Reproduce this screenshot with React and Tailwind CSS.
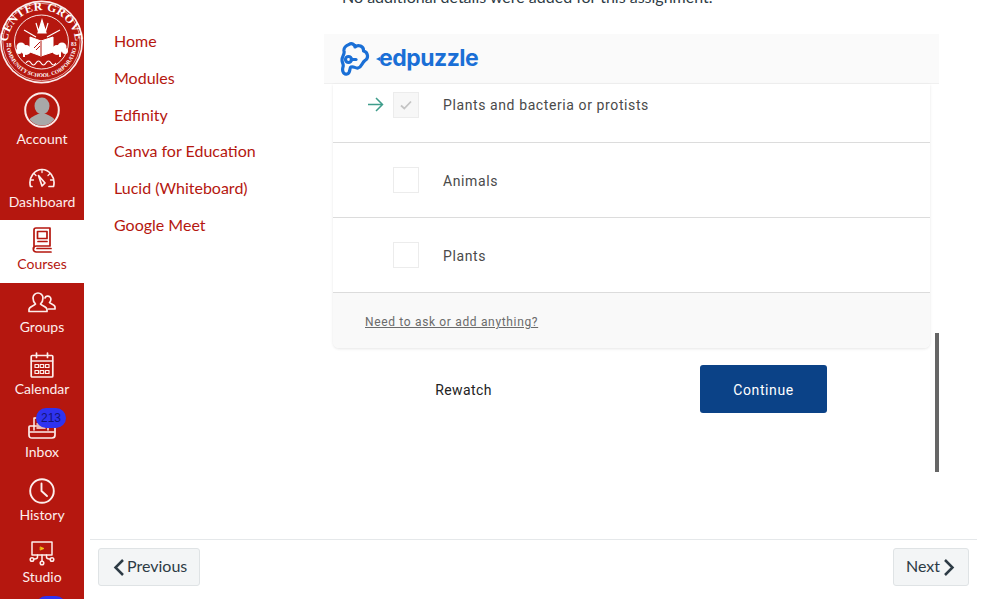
import React from "react";

const RED = "#b5170f";

function Seal() {
  return (
    <svg width="84" height="86" viewBox="0 0 84 86" className="block">
      <defs>
        <path id="sealTop" d="M 10 57 A 34 34 0 1 1 73 57" />
        <path id="sealBottom" d="M 7 50 A 35.500 35.500 0 0 0 76 50" />
      </defs>
      <circle cx="41.500" cy="42" r="41.500" fill="#fbeeee" />
      <circle cx="41.500" cy="42" r="39.800" fill={RED} />
      <circle cx="41.500" cy="42" r="38.600" fill="none" stroke="#fff" strokeWidth="0.600" />
      <circle cx="41.500" cy="42" r="27" fill="none" stroke="#fff" strokeWidth="0.900" />
      <text fill="#fff" fontSize="11.800" fontWeight="700" fontFamily="'Liberation Serif', serif" letterSpacing="0.500">
        <textPath href="#sealTop" startOffset="50%" textAnchor="middle">CENTER GROVE</textPath>
      </text>
      <text fill="#fff" fontSize="5.600" fontWeight="700" fontFamily="'Liberation Serif', serif">
        <textPath href="#sealBottom" startOffset="50%" textAnchor="middle">COMMUNITY SCHOOL CORPORATION</textPath>
      </text>
      <text x="6" y="47" fill="#fff" fontSize="5.500" fontWeight="700" fontFamily="'Liberation Serif', serif">18</text>
      <text x="71" y="46" fill="#fff" fontSize="5.500" fontWeight="700" fontFamily="'Liberation Serif', serif">83</text>
      <path d="M42 20 L38 33 L46 33 Z M36 23 L39 33 M48 23 L45 33 M24 30 L36 37 M60 30 L47 37" stroke="#fff" strokeWidth="1.200" fill="#fff" />
      <path d="M30 37 L41 41 L53 37 L53 52 L41 56 L30 52 Z" fill="#fff" stroke="#fff" />
      <path d="M41 41 L41 56 M34 48 L40 42 M36 50 L40 46" stroke={RED} strokeWidth="1" fill="none" />
      <circle cx="21" cy="47" r="4.500" fill="#fff" /><circle cx="26" cy="50" r="5" fill="#fff" /><circle cx="19" cy="51" r="3" fill="#fff" />
      <rect x="23" y="52" width="2" height="5" fill="#fff" />
      <circle cx="62" cy="47" r="4.500" fill="#fff" /><circle cx="57" cy="50" r="5" fill="#fff" /><circle cx="65" cy="51" r="3" fill="#fff" />
      <rect x="59" y="52" width="2" height="5" fill="#fff" />
      <path d="M26 63 q2.500 -4 5 0 t5 0 t5 0 t5 0 t5 0 t5 0" stroke="#fff" strokeWidth="1.200" fill="none" />
    </svg>
  );
}

const s = { fill: "none", stroke: "currentColor", strokeWidth: 1.7, strokeLinejoin: "round", strokeLinecap: "round" };

const Avatar = () => (
  <svg width="36" height="36" viewBox="0 0 36 36" className="mb-[10px] shrink-0">
    <defs><clipPath id="avc"><circle cx="18" cy="18" r="15.600" /></clipPath></defs>
    <circle cx="18" cy="18" r="16.800" fill="#b5170f" stroke="#fbe9e7" strokeWidth="2" />
    <g clipPath="url(#avc)" fill="#a8a8a8">
      <ellipse cx="18" cy="14" rx="7.500" ry="8.500" />
      <path d="M2 36 C3 26 10 24 14 22 L22 22 C26 24 33 26 34 36 Z" />
    </g>
  </svg>
);
const Dash = () => (
  <svg width="28" height="20" viewBox="0 0 28 20" {...s}>
    <path d="M4 18.500 H2.500 C0 9 7 1.500 14 1.500 C21 1.500 28 9 25.500 18.500 H21" />
    <path d="M14 1.500 v3 M6 5.500 l2 2 M22 5.500 l-2 2 M2.500 12 h3 M25.500 12 h-3" strokeWidth="1.300" />
    <path d="M10.500 7.500 L17 15 L14 18 Z" />
  </svg>
);
const Courses = () => (
  <svg width="22" height="26" viewBox="0 0 22 26" {...s}>
    <path d="M3 21 V3 Q3 1 5 1 H19 V19 H5.500 Q2 19 2.300 22 Q2.500 25 5.500 25 H20" />
    <path d="M20 21.500 H6" />
    <rect x="6.500" y="4.500" width="9.500" height="7" />
    <path d="M7 14.500 H16" />
  </svg>
);
const Groups = () => (
  <svg width="28" height="21" viewBox="0 0 28 21" {...s}>
    <path d="M1 19.500 V17.500 C1 15 6 14 7.500 12 C5.500 10 5 8 5 6 C5 3 7.500 1 10 1 C12.500 1 15 3 15 6 C15 8 14.500 10 12.500 12 C14 14 19 15 19 17.500 V19.500 Z" />
    <path d="M17 6 C17.500 4 20.500 3.500 22 5 C23.500 6.500 23 9 21.500 10.500 C22.500 12 27 12.500 27 15 V17 H20.500" />
  </svg>
);
const Calendar = () => (
  <svg width="24" height="26" viewBox="0 0 24 26" {...s}>
    <rect x="1.200" y="3.500" width="21.600" height="21.500" rx="1" />
    <path d="M1.500 9 H22.500 M6.500 1 V5.500 M17.500 1 V5.500" />
    <path d="M5 12.500 h3.500 v3 h-3.500 z M10.200 12.500 h3.500 v3 h-3.500 z M15.500 12.500 h3.500 v3 h-3.500 z M5 18.500 h3.500 v3 h-3.500 z M10.200 18.500 h3.500 v3 h-3.500 z M15.500 18.500 h3.500 v3 h-3.500 z" strokeWidth="1.200" />
  </svg>
);
const Inbox = () => (
  <svg width="28" height="24" viewBox="0 0 28 24" {...s}>
    <path d="M2 10 H26 Q27 10 27 11 V19 Q27 22 24 22 H4 Q1 22 1 19 V11 Q1 10 2 10 Z" />
    <path d="M6 14 V2 H20 V14 M9 8 H16 M9 12 H17 M2 16 H26" strokeWidth="1.500" />
  </svg>
);
const History = () => (
  <svg width="26" height="26" viewBox="0 0 26 26" {...s}>
    <circle cx="13" cy="13" r="11.800" strokeWidth="1.900" />
    <path d="M12.500 5.500 V13 L18 18" strokeWidth="1.900" />
  </svg>
);
const Studio = () => (
  <svg width="26" height="25" viewBox="0 0 26 25" {...s}>
    <rect x="3" y="1" width="20" height="13" strokeWidth="1.500" />
    <path d="M11.500 6 L15 7.500 L11.500 9 Z" fill="#f5c518" stroke="#f5c518" strokeWidth="0.800" />
    <path d="M13 14 V20 M8.500 14 V16 Q8.500 18 5.500 18 H4.500 M17.500 14 V16 Q17.500 18 20.500 18 H21.500" strokeWidth="1.500" />
    <circle cx="13" cy="22" r="1.800" strokeWidth="1.500" /><circle cx="3" cy="18.500" r="1.800" strokeWidth="1.500" /><circle cx="23" cy="18.500" r="1.800" strokeWidth="1.500" />
  </svg>
);

function NavItem({ icon, label, active, badge }) {
  return (
    <div className={`relative h-[62.600px] flex flex-col items-center justify-end pb-[8.600px] ${active ? "bg-white text-[#b5170f]" : "text-[#fdeeec]"}`}>
      <div className="h-[26px] flex items-center justify-center">{icon}</div>
      <div className="mt-[1px] text-[14px] leading-[20px]">{label}</div>
      {badge && (
        <div className="absolute left-[36px] top-0 h-[20px] w-[30px] rounded-full bg-[#2f33f0] text-[#14147a] text-[12px] leading-[20px] text-center font-['Liberation_Sans',sans-serif]">
          {badge}
        </div>
      )}
    </div>
  );
}

function Option({ label, first, checked }) {
  return (
    <div className={`flex items-center border-b border-[#dcdcdc] pl-[60px] ${first ? "h-[59px] pb-[16px]" : "h-[75px]"}`}>
      <div className={`relative h-[26px] w-[26px] border border-[#ececec] flex items-center justify-center ${checked ? "bg-[#f7f7f7]" : "bg-white"}`}>
        {checked && (
          <>
            <svg width="12" height="10" viewBox="0 0 12 10" fill="none" stroke="#c4c4c4" strokeWidth="1.800"><path d="M1 5.500 L4.300 8.500 L11 1.500" /></svg>
            <svg className="absolute left-[-27px] top-[4px]" width="17" height="15" viewBox="0 0 17 15" fill="none" stroke="#3f9d8b" strokeWidth="1.500"><path d="M1 7.500 H15.500 M9 1 L15.500 7.500 L9 14" /></svg>
          </>
        )}
      </div>
      <div className={`ml-[24px] text-[14px] tracking-[0.600px] text-[#4a4a4a] font-['Roboto',sans-serif] ${first ? "mt-[1px]" : "mt-[2px]"}`}>{label}</div>
    </div>
  );
}

export default function App() {
  const links = ["Home", "Modules", "Edfinity", "Canva for Education", "Lucid (Whiteboard)", "Google Meet"];
  return (
    <div className="flex h-[599px] w-[987px] overflow-hidden bg-white font-['Lato',sans-serif]">
      <aside className="w-[84px] shrink-0 bg-[#b5170f] overflow-hidden">
        <div className="h-[95px]"><Seal /></div>
        <NavItem icon={<Avatar />} label="Account" />
        <NavItem icon={<Dash />} label="Dashboard" />
        <NavItem icon={<Courses />} label="Courses" active />
        <NavItem icon={<Groups />} label="Groups" />
        <NavItem icon={<Calendar />} label="Calendar" />
        <NavItem icon={<Inbox />} label="Inbox" badge="213" />
        <NavItem icon={<History />} label="History" />
        <NavItem icon={<Studio />} label="Studio" />
        <NavItem icon={null} label="" badge=" " />
      </aside>

      <main className="flex-1 flex flex-col min-w-0">
        <div className="h-[539px] flex overflow-hidden">
          <nav className="w-[240px] shrink-0 pl-[30px] pt-[23px]">
            {links.map((l) => (
              <div key={l} className="h-[36.800px] text-[16px] leading-[36.800px] text-[#b5170f]">{l}</div>
            ))}
          </nav>
          <section className="relative w-[615px] shrink-0">
            <div className="mt-[-15px] pl-[18px] text-[16px] leading-[24px] text-[#2d3b45]">No additional details were added for this assignment.</div>
            <header className="mt-[25px] h-[50px] bg-[#fafafa] border-b border-[#f0f0f0] flex items-center pl-[16px]">
              <svg width="30" height="34" viewBox="0 0 30 34" fill="none" stroke="#1a6fd6" strokeWidth="3.200" strokeLinejoin="round" strokeLinecap="round">
                <path d="M9 2.500 C12 0.500 15 3 15 5 C18 2 24 4 23.500 9 C28 10 29 16 25 18.500 C22 20 22 25 18 26 C15 26.500 14 24 11 25 C9 26 11 31 7 32 C3 33 2 28 3 25 C4 22 2 21 2 18 C2 14 5 12 4 9 C3.500 6 6 3.500 9 2.500 Z" />
                <circle cx="8.500" cy="17.500" r="3" />
                <path d="M11.500 17.500 H16" />
              </svg>
              <svg width="4" height="4" viewBox="0 0 4 4" className="ml-[6px] mt-[1px] shrink-0"><path d="M0 2 L4 0 V4 Z" fill="#1a6fd6" /></svg>
              <span className="ml-[-1px] mt-[-2px] text-[23px] leading-[30px] font-bold tracking-[-0.500px] text-[#1a6fd6] font-['Inter',sans-serif]">edpuzzle</span>
            </header>
            <div className="mx-[9px] w-[597px] rounded-b-[6px] shadow-[0_1px_3px_rgba(0,0,0,0.1)] bg-white">
              <Option first checked label="Plants and bacteria or protists" />
              <Option label="Animals" />
              <Option label="Plants" />
              <div className="h-[55px] bg-[#f9f9f9] rounded-b-[6px] pl-[32px] pt-[20px]">
                <span className="block text-[12px] leading-[18px] tracking-[0.660px] text-[#6b6b6b] underline font-['Roboto',sans-serif]">Need to ask or add anything?</span>
              </div>
            </div>
            <div className="mt-[17px] flex items-center">
              <div className="w-[279px] pt-[2px] text-center text-[14px] tracking-[0.400px] text-[#222222] font-['Roboto',sans-serif]">Rewatch</div>
              <button className="ml-[97px] h-[48px] w-[127px] rounded-[3px] bg-[#0b4287] pt-[2px] text-[14px] tracking-[0.600px] text-white font-['Roboto',sans-serif]">Continue</button>
            </div>
            <div className="absolute right-0 top-[333px] h-[139px] w-[4px] bg-[#666666]" />
          </section>
        </div>

        <footer className="ml-[6px] mr-[10px] h-[60px] border-t border-[#e5e8ea] pt-[8px] pl-[8px] pr-[8px] flex justify-between items-start">
          <button className="h-[38px] w-[102px] rounded-[3px] border border-[#dfe3e5] bg-[#f3f5f6] flex items-center pl-[14px] pb-[2px] text-[16px] text-[#2d3b45]">
            <svg width="12" height="17" viewBox="0 0 12 17" fill="none" stroke="#2d3b45" strokeWidth="2.500" className="mr-[2px] mt-[2px] shrink-0"><path d="M10 1 L2.500 8.500 L10 16" /></svg>
            Previous
          </button>
          <button className="h-[38px] w-[76px] rounded-[3px] border border-[#dfe3e5] bg-[#f3f5f6] flex items-center pl-[12px] pb-[2px] text-[16px] text-[#2d3b45]">
            Next
            <svg width="12" height="17" viewBox="0 0 12 17" fill="none" stroke="#2d3b45" strokeWidth="2.500" className="ml-[3px] mt-[2px] shrink-0"><path d="M2 1 L9.500 8.500 L2 16" /></svg>
          </button>
        </footer>
      </main>
    </div>
  );
}
